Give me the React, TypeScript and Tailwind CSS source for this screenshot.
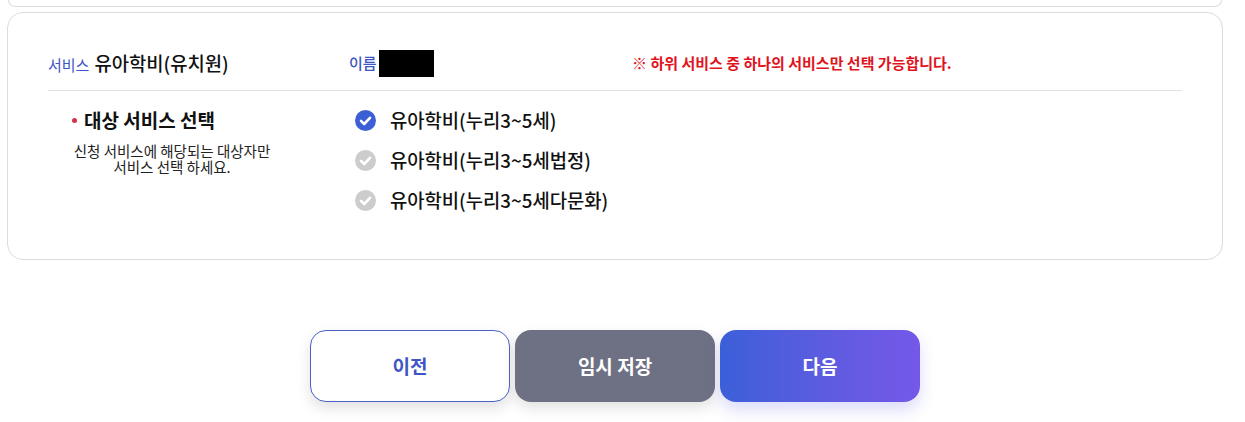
import React from "react";

const font = { fontFamily: '"Noto Sans CJK KR", "Noto Sans", sans-serif' };

function Check({ on }: { on: boolean }) {
  return (
    <svg width="21" height="21" viewBox="0 0 21 21" className="shrink-0">
      <circle cx="10.5" cy="10.5" r="10.5" fill={on ? "#3d5fd6" : "#cccccc"} />
      <path d="M6 10.8 L9.2 14 L15 7.8" fill="none" stroke="#ffffff" strokeWidth="2.6" strokeLinecap="round" strokeLinejoin="round" />
    </svg>
  );
}

export default function App() {
  const items = [
    { label: "유아학비(누리3~5세)", on: true },
    { label: "유아학비(누리3~5세법정)", on: false },
    { label: "유아학비(누리3~5세다문화)", on: false },
  ];
  return (
    <div className="w-[1245px] h-[422px] bg-white overflow-hidden relative" style={font}>
      <div className="ml-[8px] w-[1214px] h-[7px] -mt-[20px] box-content pt-[20px]">
        <div className="h-[7px] border-b border-x border-[#dcdcdc] rounded-b-[16px]"></div>
      </div>
      <div className="ml-[7px] mt-[5px] w-[1216px] h-[248px] border border-[#dcdcdc] rounded-[16px] px-[40px]">
        <div className="flex items-center h-[78px] pt-[24px] border-b border-[#e2e2e2] w-[1134px]">
          <div className="w-[301px] flex items-baseline">
            <span className="text-[15px] text-[#3d55c5]">서비스</span>
            <span className="text-[18.8px] font-medium text-[#111] ml-[5px]">유아학비(유치원)</span>
          </div>
          <div className="w-[283px] flex items-center">
            <span className="text-[15px] text-[#3d55c5] font-medium">이름</span>
            <span className="w-[55px] h-[27px] bg-black ml-[2px] inline-block"></span>
          </div>
          <span className="text-[15px] font-bold text-[#e0141e]">※ 하위 서비스 중 하나의 서비스만 선택 가능합니다.</span>
        </div>
        <div className="flex pt-[14px]">
          <div className="w-[307px] pl-[24px]">
            <div className="flex items-center h-[30px]">
              <span className="w-[5px] h-[5px] rounded-full bg-[#d6304a] mr-[7px]"></span>
              <span className="text-[19px] font-bold text-[#111]">대상 서비스 선택</span>
            </div>
            <div className="w-[200px] mt-[8px] text-center text-[14.5px] leading-[16px] text-[#222]">
              신청 서비스에 해당되는 대상자만<br />서비스 선택 하세요.
            </div>
          </div>
          <div className="flex flex-col gap-[15px] pt-[3px]">
            {items.map((it) => (
              <div key={it.label} className="flex items-center h-[25px]">
                <Check on={it.on} />
                <span className="ml-[14px] text-[18.8px] font-medium text-[#111]">{it.label}</span>
              </div>
            ))}
          </div>
        </div>
      </div>
      <div className="flex justify-center gap-[5px] mt-[70px] pr-[15px]">
        <button className="w-[200px] h-[72px] rounded-[16px] bg-white border border-[#4a63c4] text-[#3d55c5] text-[19px] font-bold shadow-[0_6px_14px_rgba(0,0,0,0.12)]">이전</button>
        <button className="w-[200px] h-[72px] rounded-[16px] bg-[#6e7083] text-white text-[19px] font-bold shadow-[0_6px_14px_rgba(0,0,0,0.12)]">임시 저장</button>
        <button className="w-[200px] h-[72px] rounded-[16px] bg-gradient-to-r from-[#3b5fd9] to-[#7558e8] text-white text-[19px] font-bold shadow-[0_8px_16px_rgba(90,90,230,0.22)]">다음</button>
      </div>
    </div>
  );
}
